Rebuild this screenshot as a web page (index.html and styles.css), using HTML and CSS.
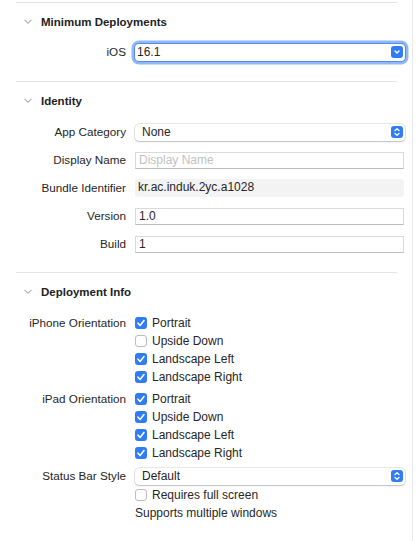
FILE: index.html
```html
<!DOCTYPE html>
<html>
<head>
<meta charset="utf-8">
<link rel="stylesheet" href="styles.css">
</head>
<body>
<div class="pane">
  <div class="sep"></div>

  <div class="section-head">
    <svg class="disclosure" width="8" height="5" viewBox="0 0 8 5"><polyline points="0.5,0.8 4,4.2 7.5,0.8" fill="none" stroke="#b3b3b3" stroke-width="1.1"/></svg>
    <span>Minimum Deployments</span>
  </div>
  <div class="rows rows-min">
    <div class="row">
      <label class="lbl">iOS</label>
      <div class="popup focused">
        <span>16.1</span>
        <span class="pbtn"><svg width="12" height="12" viewBox="0 0 12 12"><polyline points="4,5 6,7 8,5" fill="none" stroke="#fff" stroke-width="1.4" stroke-linecap="round" stroke-linejoin="round"/></svg></span>
      </div>
    </div>
  </div>

  <div class="sep"></div>

  <div class="section-head">
    <svg class="disclosure" width="8" height="5" viewBox="0 0 8 5"><polyline points="0.5,0.8 4,4.2 7.5,0.8" fill="none" stroke="#b3b3b3" stroke-width="1.1"/></svg>
    <span>Identity</span>
  </div>
  <div class="rows rows-id">
    <div class="row">
      <label class="lbl">App Category</label>
      <div class="popup">
        <span>None</span>
        <span class="pbtn"><svg width="12" height="12" viewBox="0 0 12 12"><polyline points="4,4.6 6,2.8 8,4.6" fill="none" stroke="#fff" stroke-width="1.3" stroke-linecap="round" stroke-linejoin="round"/><polyline points="4,7.4 6,9.2 8,7.4" fill="none" stroke="#fff" stroke-width="1.3" stroke-linecap="round" stroke-linejoin="round"/></svg></span>
      </div>
    </div>
    <div class="row">
      <label class="lbl">Display Name</label>
      <div class="field placeholder">Display Name</div>
    </div>
    <div class="row">
      <label class="lbl">Bundle Identifier</label>
      <div class="field readonly">kr.ac.induk.2yc.a1028</div>
    </div>
    <div class="row">
      <label class="lbl">Version</label>
      <div class="field">1.0</div>
    </div>
    <div class="row">
      <label class="lbl">Build</label>
      <div class="field">1</div>
    </div>
  </div>

  <div class="sep"></div>

  <div class="section-head">
    <svg class="disclosure" width="8" height="5" viewBox="0 0 8 5"><polyline points="0.5,0.8 4,4.2 7.5,0.8" fill="none" stroke="#b3b3b3" stroke-width="1.1"/></svg>
    <span>Deployment Info</span>
  </div>
  <div class="rows rows-dep">
    <div class="row group">
      <label class="lbl top">iPhone Orientation</label>
      <div class="checks">
        <div class="check"><span class="box on"><svg width="12" height="12" viewBox="0 0 12 12"><polyline points="3,6.2 5.1,8.4 9,3.6" fill="none" stroke="#fff" stroke-width="1.6" stroke-linecap="round" stroke-linejoin="round"/></svg></span>Portrait</div>
        <div class="check"><span class="box"></span>Upside Down</div>
        <div class="check"><span class="box on"><svg width="12" height="12" viewBox="0 0 12 12"><polyline points="3,6.2 5.1,8.4 9,3.6" fill="none" stroke="#fff" stroke-width="1.6" stroke-linecap="round" stroke-linejoin="round"/></svg></span>Landscape Left</div>
        <div class="check"><span class="box on"><svg width="12" height="12" viewBox="0 0 12 12"><polyline points="3,6.2 5.1,8.4 9,3.6" fill="none" stroke="#fff" stroke-width="1.6" stroke-linecap="round" stroke-linejoin="round"/></svg></span>Landscape Right</div>
      </div>
    </div>
    <div class="row group ipad">
      <label class="lbl top">iPad Orientation</label>
      <div class="checks">
        <div class="check"><span class="box on"><svg width="12" height="12" viewBox="0 0 12 12"><polyline points="3,6.2 5.1,8.4 9,3.6" fill="none" stroke="#fff" stroke-width="1.6" stroke-linecap="round" stroke-linejoin="round"/></svg></span>Portrait</div>
        <div class="check"><span class="box on"><svg width="12" height="12" viewBox="0 0 12 12"><polyline points="3,6.2 5.1,8.4 9,3.6" fill="none" stroke="#fff" stroke-width="1.6" stroke-linecap="round" stroke-linejoin="round"/></svg></span>Upside Down</div>
        <div class="check"><span class="box on"><svg width="12" height="12" viewBox="0 0 12 12"><polyline points="3,6.2 5.1,8.4 9,3.6" fill="none" stroke="#fff" stroke-width="1.6" stroke-linecap="round" stroke-linejoin="round"/></svg></span>Landscape Left</div>
        <div class="check"><span class="box on"><svg width="12" height="12" viewBox="0 0 12 12"><polyline points="3,6.2 5.1,8.4 9,3.6" fill="none" stroke="#fff" stroke-width="1.6" stroke-linecap="round" stroke-linejoin="round"/></svg></span>Landscape Right</div>
      </div>
    </div>
    <div class="row status">
      <label class="lbl">Status Bar Style</label>
      <div class="popup">
        <span>Default</span>
        <span class="pbtn"><svg width="12" height="12" viewBox="0 0 12 12"><polyline points="4,4.6 6,2.8 8,4.6" fill="none" stroke="#fff" stroke-width="1.3" stroke-linecap="round" stroke-linejoin="round"/><polyline points="4,7.4 6,9.2 8,7.4" fill="none" stroke="#fff" stroke-width="1.3" stroke-linecap="round" stroke-linejoin="round"/></svg></span>
      </div>
    </div>
    <div class="row req">
      <span></span>
      <div class="check"><span class="box"></span>Requires full screen</div>
    </div>
    <div class="row">
      <span></span>
      <div class="plain">Supports multiple windows</div>
    </div>
  </div>
</div>
</body>
</html>
```

FILE: styles.css
```css
html, body {
  margin: 0;
  padding: 0;
  background: #ffffff;
}

body {
  font-family: "Liberation Sans", Arial, Helvetica, sans-serif;
  font-size: 12px;
  color: #262626;
}

.pane {
  width: 413px;
  height: 541px;
  border-right: 1px solid #e8e8e8;
  padding-top: 2px;
  box-sizing: border-box;
  overflow: hidden;
}

.sep {
  height: 1px;
  background: #e3e3e3;
  margin: 0 15px 0 16px;
}

.section-head {
  height: 37px;
  display: flex;
  align-items: center;
  padding-left: 24px;
  font-weight: bold;
  font-size: 11.5px;
  color: #222;
}

.disclosure {
  margin-right: 9px;
  flex: none;
}

.rows {
  display: flex;
  flex-direction: column;
  padding-left: 16px;
}

.rows-min {
  margin-top: 3px;
  margin-bottom: 20px;
}

.rows-id {
  margin-top: 4px;
  margin-bottom: 19px;
  gap: 10px;
}

.rows-dep {
  margin-top: 4px;
}

.row {
  display: grid;
  grid-template-columns: 110px 269px;
  column-gap: 9px;
  align-items: center;
  min-height: 18px;
}

.lbl {
  text-align: right;
  white-space: nowrap;
  line-height: 18px;
  font-size: 11.7px;
}

.lbl.top {
  align-self: start;
}

.group {
  align-items: start;
}

.ipad {
  margin-top: 4px;
}

.status {
  margin-top: 5px;
}

.req {
  margin-top: 1px;
}

.popup {
  height: 17px;
  box-sizing: border-box;
  background: #fff;
  border-radius: 4px;
  box-shadow: 0 0 0 0.5px rgba(0, 0, 0, 0.18), 0 1px 1.5px rgba(0, 0, 0, 0.18);
  display: flex;
  align-items: center;
  justify-content: space-between;
  padding: 0 2px 0 7px;
  width: 270px;
}

.popup.focused {
  box-shadow: 0 0 0 1px rgba(40, 110, 230, 0.6), 0 0 0 3.5px rgba(70, 135, 240, 0.6);
  padding-left: 2px;
}

.pbtn {
  width: 12px;
  height: 12px;
  border-radius: 3px;
  background: #2f7cf6;
  display: flex;
  align-items: center;
  justify-content: center;
}

.pbtn svg {
  display: block;
}

.field {
  height: 17px;
  box-sizing: border-box;
  border: 1px solid #d9d9d9;
  border-bottom-color: #bebebe;
  padding: 0 3px;
  line-height: 15px;
  background: #fff;
}

.field.placeholder {
  color: #c2c2c2;
}

.field.readonly {
  background: #f3f3f3;
  border: none;
  border-radius: 3px;
  line-height: 17px;
  padding-left: 3px;
  height: 18px;
}

.checks {
  display: flex;
  flex-direction: column;
}

.check {
  display: flex;
  align-items: center;
  height: 18px;
  white-space: nowrap;
}

.box {
  width: 12px;
  height: 12px;
  box-sizing: border-box;
  border-radius: 3px;
  border: 1px solid #bdbdbd;
  background: #fff;
  margin-right: 5px;
  flex: none;
  display: flex;
  align-items: center;
  justify-content: center;
}

.box.on {
  background: #2f7cf6;
  border: none;
}

.box svg {
  display: block;
}

.plain {
  line-height: 18px;
  white-space: nowrap;
}
```
